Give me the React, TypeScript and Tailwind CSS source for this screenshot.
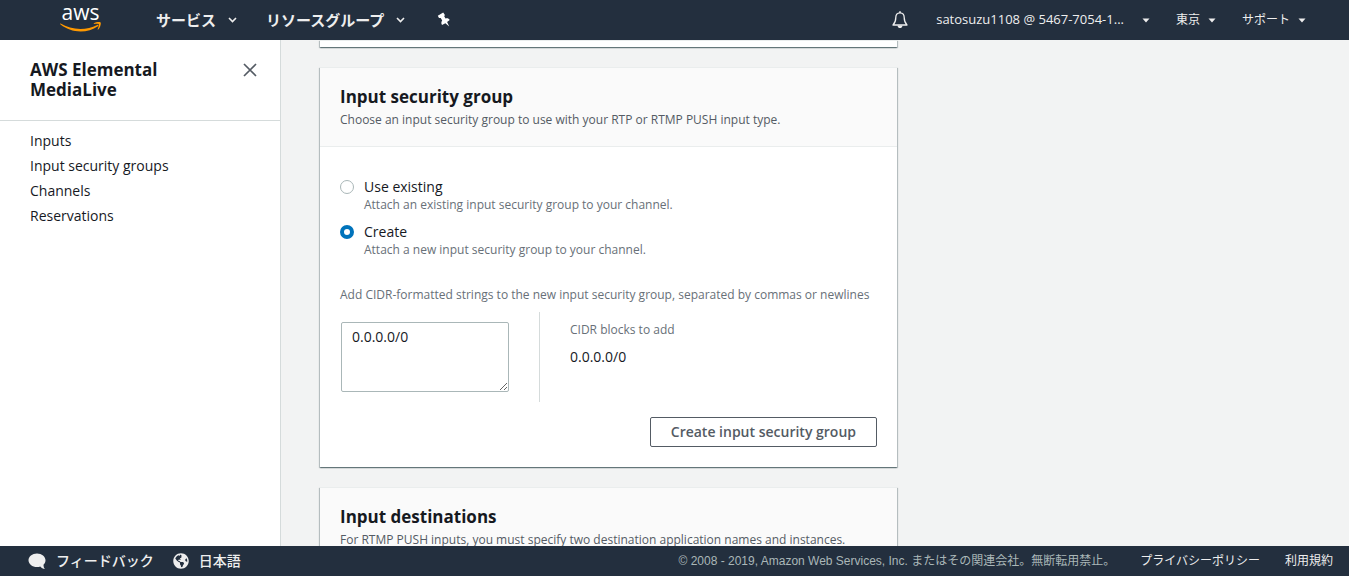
import { useState } from "react";
import type { ReactNode } from "react";
import { FaGlobeAmericas } from "react-icons/fa";

function AwsLogo() {
  return (
    <svg width="42" height="34" viewBox="0 0 42 34" role="img" aria-label="aws">
      <text
        x="20.5"
        y="20"
        textAnchor="middle"
        fontFamily="'Open Sans', sans-serif"
        fontSize="21"
        fontWeight="500"
        fill="#ffffff"
      >
        aws
      </text>
      <path d="M0.6 23.600C11 30 26 31 37.200 24.900C38.200 24.500 38.900 25.500 37.900 26.200C27 34 10.500 33 0.300 24.300C-0.1 23.900 0.200 23.400 0.600 23.600Z" fill="#ff9900" />
      <path d="M33.800 23.500C35.800 22 39.800 21.700 40.600 22.500C41.300 23.400 40.300 27.600 38.300 29.500C37.900 29.800 37.500 29.600 37.700 29.100C38.300 27.500 39.300 24.900 38.800 24.300C38.300 23.600 35.600 23.900 34.200 24.100C33.700 24.100 33.500 23.800 33.800 23.500Z" fill="#ff9900" />
    </svg>
  );
}

function Chevron() {
  return (
    <svg width="9" height="6" viewBox="0 0 9 6" aria-hidden="true">
      <path d="M1 1L4.500 4.500L8 1" fill="none" stroke="#eeeeee" strokeWidth="1.600" />
    </svg>
  );
}

function Caret() {
  return (
    <svg width="8" height="5" viewBox="0 0 8 5" aria-hidden="true">
      <path d="M0.500 0.500H7.500L4 4.500Z" fill="#eeeeee" />
    </svg>
  );
}

function Pin() {
  return (
    <svg width="14" height="16" viewBox="0 0 14 16" aria-hidden="true">
      <path
        d="M0.800 3.800L6.200 0.600L7.900 3L7.200 4.200L8.500 6.500C10.300 5.900 11.900 6.400 12.700 7.900L10.100 9.900L12.200 14.600L8.400 11.200L5 13C4 11.600 4.200 9.900 5.200 8.600L3.700 6L2 5.900Z"
        fill="#ffffff"
      />
    </svg>
  );
}

function Bell() {
  return (
    <svg width="16" height="18" viewBox="0 0 16 18" aria-hidden="true">
      <path
        d="M8 1.800C5 1.800 3.800 4 3.800 6.500C3.800 10.500 3 12 1 14H15C13 12 12.200 10.500 12.200 6.500C12.200 4 11 1.800 8 1.800Z"
        fill="none"
        stroke="#eeeeee"
        strokeWidth="1.300"
        strokeLinejoin="round"
      />
      <path d="M8 0.300V2" stroke="#eeeeee" strokeWidth="1.600" />
      <path d="M5.500 14.500H10.500C10.200 16.300 9.300 17.100 8 17.100S5.800 16.300 5.500 14.500Z" fill="#eeeeee" />
    </svg>
  );
}

function Speech() {
  return (
    <svg width="18" height="17" viewBox="0 0 18 17" aria-hidden="true">
      <path
        d="M9 0.500C4.200 0.500 0.500 3.600 0.500 7.300S4.200 14.100 9 14.100C10.200 14.100 11.300 13.900 12.300 13.500C13.400 14.800 15 15.900 17 16.100C15.900 14.900 15.500 13.400 15.500 11.700C16.800 10.500 17.500 9 17.500 7.300C17.500 3.600 13.800 0.500 9 0.500Z"
        fill="#eeeeee"
      />
    </svg>
  );
}

function Card({ children }: { children?: ReactNode }) {
  return (
    <section className="border-t border-[#eaeded] bg-white shadow-[0_1px_1px_0_rgba(0,28,36,0.35),1px_1px_1px_0_rgba(0,28,36,0.2),-1px_1px_1px_0_rgba(0,28,36,0.2)]">
      {children}
    </section>
  );
}

function CardHeader({ title, text }: { title: string; text: string }) {
  return (
    <header className="border-b border-[#eaeded] bg-[#fafafa] px-5 pt-[18px] pb-4">
      <h2 className="text-[17px] leading-[22px] font-bold text-[#16191f]">{title}</h2>
      <p className="mt-[2px] text-xs leading-5 text-[#545b64]">{text}</p>
    </header>
  );
}

type OptionProps = {
  id: string;
  label: string;
  text: string;
  checked: boolean;
  onSelect: () => void;
};

function Option({ id, label, text, checked, onSelect }: OptionProps) {
  return (
    <div className="flex gap-[10px]">
      <input
        type="radio"
        name="group-mode"
        id={id}
        checked={checked}
        onChange={onSelect}
        aria-describedby={id + "-text"}
        className="mt-[3px] size-[14px] shrink-0 appearance-none rounded-full border border-[#aab7b8] bg-white checked:border-4 checked:border-[#0073bb]"
      />
      <div>
        <label htmlFor={id} className="block text-sm leading-5 text-[#16191f]">
          {label}
        </label>
        <p id={id + "-text"} className="text-xs leading-4 text-[#687078]">
          {text}
        </p>
      </div>
    </div>
  );
}

const links = ["Inputs", "Input security groups", "Channels", "Reservations"];

export default function App() {
  const [mode, setMode] = useState("create");
  const [cidr, setCidr] = useState("0.0.0.0/0");

  return (
    <div className="flex h-screen flex-col overflow-hidden bg-[#f2f3f3] font-['Open_Sans','Noto_Sans_CJK_JP',sans-serif]">
      <header className="flex h-10 shrink-0 items-center bg-[#232f3e] pr-[43px] pl-[60px] text-[#eeeeee]">
        <a href="#home" className="block h-10">
          <AwsLogo />
        </a>
        <nav className="flex flex-1 items-center text-[15px] font-bold">
          <button type="button" className="ml-[54px] flex items-center gap-3">
            サービス
            <Chevron />
          </button>
          <button type="button" className="ml-[29px] flex items-center gap-3">
            リソースグループ
            <Chevron />
          </button>
          <button type="button" aria-label="Pin" className="ml-8">
            <Pin />
          </button>
        </nav>
        <div className="flex items-center text-[13px]">
          <button type="button" aria-label="Notifications" className="mr-[28px]">
            <Bell />
          </button>
          <button type="button" className="flex items-center gap-[18px]">
            satosuzu1108 @ 5467-7054-1...
            <Caret />
          </button>
          <button type="button" className="ml-[26px] flex items-center gap-2 text-xs">
            東京
            <Caret />
          </button>
          <button type="button" className="ml-[26px] flex items-center gap-2 text-xs">
            サポート
            <Caret />
          </button>
        </div>
      </header>

      <div className="flex min-h-0 flex-1">
        <aside className="w-[281px] shrink-0 border-r border-[#d5dbdb] bg-white">
          <div className="flex items-start justify-between border-b border-[#d5dbdb] pt-5 pr-[23px] pb-5 pl-[30px]">
            <h1 className="w-40 text-[17px] leading-5 font-bold text-[#16191f]">AWS Elemental MediaLive</h1>
            <button type="button" aria-label="Close" className="mt-[3px]">
              <svg width="14" height="14" viewBox="0 0 14 14" aria-hidden="true">
                <path d="M1 1L13 13M13 1L1 13" stroke="#545b64" strokeWidth="1.700" />
              </svg>
            </button>
          </div>
          <nav className="flex flex-col items-start gap-[5px] py-[10px] pl-[30px] text-sm leading-5 text-[#16191f]">
            {links.map((name) => (
              <a key={name} href="#nav">
                {name}
              </a>
            ))}
          </nav>
        </aside>

        <main className="flex-1 overflow-hidden pr-5 pl-[39px]">
          <div className="flex max-w-[577px] flex-col gap-5">
            <Card>
              <div className="h-[6px]" />
            </Card>

            <Card>
              <CardHeader
                title="Input security group"
                text="Choose an input security group to use with your RTP or RTMP PUSH input type."
              />
              <div className="px-5 pt-[30px] pb-5">
                <div className="flex flex-col gap-[9px]">
                  <Option
                    id="existing"
                    label="Use existing"
                    text="Attach an existing input security group to your channel."
                    checked={mode === "existing"}
                    onSelect={() => setMode("existing")}
                  />
                  <Option
                    id="create"
                    label="Create"
                    text="Attach a new input security group to your channel."
                    checked={mode === "create"}
                    onSelect={() => setMode("create")}
                  />
                </div>
                <label htmlFor="cidr" className="mt-[29px] block text-xs leading-4 text-[#687078]">
                  Add CIDR-formatted strings to the new input security group, separated by commas or newlines
                </label>
                <div className="mt-[9px] flex">
                  <div className="border-r border-[#d5dbdb] py-[10px] pr-[30px] pl-px">
                    <textarea
                      id="cidr"
                      value={cidr}
                      onChange={(e) => setCidr(e.target.value)}
                      className="block h-[70px] w-[168px] rounded-xs border border-[#aab7b8] bg-white px-[10px] py-1 text-sm leading-5 text-[#16191f]"
                    />
                  </div>
                  <div className="pt-[10px] pl-[30px]">
                    <h3 className="text-xs leading-4 text-[#687078]">CIDR blocks to add</h3>
                    <p className="mt-[9px] text-sm leading-5 text-[#16191f]">{cidr}</p>
                  </div>
                </div>
                <div className="mt-[15px] flex justify-end">
                  <button
                    type="button"
                    className="h-[30px] rounded-xs border border-[#545b64] bg-white px-5 text-sm font-semibold text-[#545b64]"
                  >
                    Create input security group
                  </button>
                </div>
              </div>
            </Card>

            <Card>
              <CardHeader
                title="Input destinations"
                text="For RTMP PUSH inputs, you must specify two destination application names and instances."
              />
            </Card>
          </div>
        </main>
      </div>

      <footer className="flex h-[30px] shrink-0 items-center justify-between bg-[#232f3e] pr-4 pl-7 text-[#eeeeee]">
        <div className="flex items-center text-sm font-medium">
          <button type="button" className="flex items-center gap-[10px]">
            <Speech />
            フィードバック
          </button>
          <button type="button" className="ml-[19px] flex items-center gap-[10px]">
            <FaGlobeAmericas className="size-4" />
            日本語
          </button>
        </div>
        <div className="flex items-center font-['Liberation_Sans','Noto_Sans_CJK_JP',sans-serif] text-xs">
          <span className="text-[#aab7b8]">
            © 2008 - 2019, Amazon Web Services, Inc. またはその関連会社。無断転用禁止。
          </span>
          <a href="#privacy" className="ml-[25px]">
            プライバシーポリシー
          </a>
          <a href="#terms" className="ml-[25px]">
            利用規約
          </a>
        </div>
      </footer>
    </div>
  );
}
